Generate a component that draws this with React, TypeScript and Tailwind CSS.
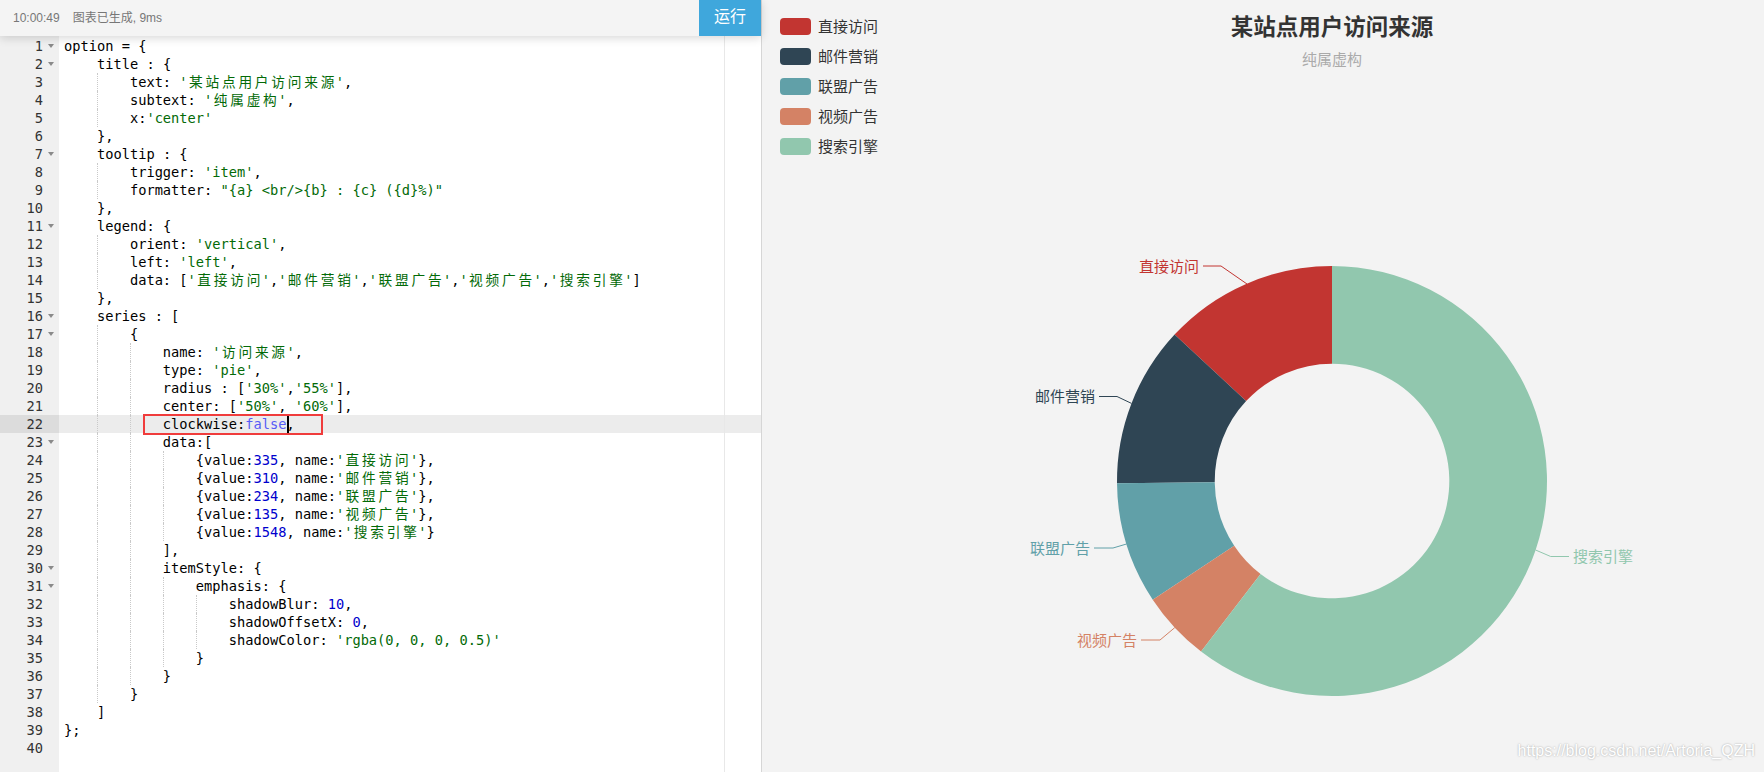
import React from "react"

const mono = "font-['DejaVu_Sans_Mono','Noto_Sans_CJK_SC',monospace]"
const cjk = "font-['Noto_Sans_CJK_SC',sans-serif]"

const CODE = [
  "option = {",
  "    title : {",
  "        text: '某站点用户访问来源',",
  "        subtext: '纯属虚构',",
  "        x:'center'",
  "    },",
  "    tooltip : {",
  "        trigger: 'item',",
  '        formatter: "{a} <br/>{b} : {c} ({d}%)"',
  "    },",
  "    legend: {",
  "        orient: 'vertical',",
  "        left: 'left',",
  "        data: ['直接访问','邮件营销','联盟广告','视频广告','搜索引擎']",
  "    },",
  "    series : [",
  "        {",
  "            name: '访问来源',",
  "            type: 'pie',",
  "            radius : ['30%','55%'],",
  "            center: ['50%', '60%'],",
  "            clockwise:false,",
  "            data:[",
  "                {value:335, name:'直接访问'},",
  "                {value:310, name:'邮件营销'},",
  "                {value:234, name:'联盟广告'},",
  "                {value:135, name:'视频广告'},",
  "                {value:1548, name:'搜索引擎'}",
  "            ],",
  "            itemStyle: {",
  "                emphasis: {",
  "                    shadowBlur: 10,",
  "                    shadowOffsetX: 0,",
  "                    shadowColor: 'rgba(0, 0, 0, 0.5)'",
  "                }",
  "            }",
  "        }",
  "    ]",
  "};",
  "",
]

const FOLDS = new Set([1, 2, 7, 11, 16, 17, 23, 30, 31])
const ACTIVE = 22

const DATA = [
  { name: "直接访问", value: 335, color: "#c23531" },
  { name: "邮件营销", value: 310, color: "#2f4554" },
  { name: "联盟广告", value: 234, color: "#61a0a8" },
  { name: "视频广告", value: 135, color: "#d48265" },
  { name: "搜索引擎", value: 1548, color: "#91c7ae" },
]

// label lines, measured off the chart (panel coords)
const LABELS = [
  { line: "485,284 459,266 441,266", x: 437, y: 265, anchor: "end" },
  { line: "369.5,403.4 355,396.5 337,396.5", x: 333, y: 395, anchor: "end" },
  { line: "364.5,544 351,548 332,548", x: 328, y: 547, anchor: "end" },
  { line: "412.8,627.6 398,640 379,640", x: 375, y: 639, anchor: "end" },
  { line: "773.6,550 788.7,556.5 807,556.5", x: 811, y: 555, anchor: "start" },
]

const CX = 570
const CY = 481
const R = 215
const R0 = 117.3

function pt(r: number, deg: number) {
  const a = (deg * Math.PI) / 180
  return [CX + r * Math.cos(a), CY - r * Math.sin(a)]
}

function ringSlice(a0: number, a1: number) {
  const large = a1 - a0 > 180 ? 1 : 0
  const [x0, y0] = pt(R, a0)
  const [x1, y1] = pt(R, a1)
  const [x2, y2] = pt(R0, a1)
  const [x3, y3] = pt(R0, a0)
  return `M${x0} ${y0} A${R} ${R} 0 ${large} 0 ${x1} ${y1} L${x2} ${y2} A${R0} ${R0} 0 ${large} 1 ${x3} ${y3}Z`
}

function wide(s: string) {
  return s.split(/([\u4e00-\u9fff])/).map((p, i) =>
    /[\u4e00-\u9fff]/.test(p) ? (
      <span key={i} className="inline-block w-[2ch] text-center">
        {p}
      </span>
    ) : (
      p
    )
  )
}

function tokenColor(t: string) {
  if (t.startsWith("'") || t.startsWith('"')) return "text-[#036a07]"
  if (/^\d+$/.test(t)) return "text-[#0000cd]"
  if (t === "false") return "text-[#585cf6]"
  return ""
}

function CodeLine({ text, active }: { text: string; active: boolean }) {
  const indent = text.match(/^ */)![0].length
  const levels = Math.floor(indent / 4)
  const rest = text.slice(levels * 4)
  const tokens = rest.split(/('[^']*'|"[^"]*"|\b\d+\b|\bfalse\b)/).filter(Boolean)

  return (
    <div className={active ? "h-[18px] whitespace-pre pl-[5px] leading-[18px] bg-[#ececec]" : "h-[18px] whitespace-pre pl-[5px] leading-[18px]"}>
      {Array.from({ length: levels }, (_, k) => (
        <span
          key={k}
          className={
            k > 0
              ? "inline-block h-[18px] w-[4ch] align-top border-l border-dotted border-[#c9c9c9]"
              : "inline-block h-[18px] w-[4ch] align-top"
          }
        />
      ))}
      {tokens.map((t, i) => (
        <span key={i} className={tokenColor(t)}>
          {wide(t)}
        </span>
      ))}
    </div>
  )
}

function Editor() {
  return (
    <div className="relative flex w-[762px] shrink-0 flex-col border-r border-[#d6d6d6] bg-white">
      {/* control bar */}
      <div className="relative z-10 flex h-[36px] shrink-0 items-center bg-[#f4f4f4] text-[12px] text-[#777] shadow-[0_2px_9px_rgba(0,0,0,0.16)] font-['Liberation_Sans','Noto_Sans_CJK_SC',sans-serif]">
        <span className="pl-[13px]">10:00:49</span>
        <span className="ml-[13px]">图表已生成, 9ms</span>
        <button className="ml-auto flex h-full w-[62px] items-center justify-center bg-[#3fa7dc] pb-[3px] text-[16px] text-white">
          运行
        </button>
      </div>

      <div className={`relative flex flex-1 text-[13.7px] text-black ${mono}`}>
        {/* gutter */}
        <div className="w-[59px] shrink-0 bg-[#f0f0f0] pt-px text-[#333]">
          {CODE.map((_, i) => (
            <div key={i} className={i + 1 === ACTIVE ? "flex h-[18px] items-center bg-[#dcdcdc]" : "flex h-[18px] items-center"}>
              <span className="w-[43px] text-right leading-[18px]">{i + 1}</span>
              <span className="flex w-[16px] justify-center">
                {FOLDS.has(i + 1) && (
                  <svg width="6" height="4" viewBox="0 0 6 4">
                    <polygon points="0,0 6,0 3,4" fill="#8a8a8a" />
                  </svg>
                )}
              </span>
            </div>
          ))}
        </div>

        {/* code */}
        <div className="relative flex-1 pt-px">
          {CODE.map((line, i) => (
            <CodeLine key={i} text={line} active={i + 1 === ACTIVE} />
          ))}
          {/* print margin */}
          <div className="absolute bottom-0 left-[665px] top-0 w-px bg-[#e8e8e8]" />
          {/* cursor */}
          <div className="absolute left-[228px] top-[379px] h-[18px] w-[2px] bg-black" />
          {/* annotation box */}
          <div className="absolute left-[84px] top-[378px] h-[21px] w-[180px] border-2 border-[#f03c3c]" />
        </div>
      </div>
    </div>
  )
}

function Chart() {
  const total = DATA.reduce((s, d) => s + d.value, 0)
  let a = 90
  const slices = DATA.map((d) => {
    const a0 = a
    a += (d.value / total) * 360
    return { ...d, a0, a1: a }
  })

  return (
    <div className={`relative flex-1 overflow-hidden bg-[#f3f3f3] ${cjk}`}>
      <svg className="absolute inset-0" width="1002" height="772">
        <text x="570" y="25" textAnchor="middle" dominantBaseline="central" fontSize="22.5" fontWeight="700" fill="#333">
          某站点用户访问来源
        </text>
        <text x="570" y="58" textAnchor="middle" dominantBaseline="central" fontSize="15" fill="#aaa">
          纯属虚构
        </text>
        {slices.map((s) => (
          <path key={s.name} d={ringSlice(s.a0, s.a1)} fill={s.color} />
        ))}
        {slices.map((s, i) => (
          <g key={s.name}>
            <polyline points={LABELS[i].line} fill="none" stroke={s.color} strokeWidth="1" />
            <text
              x={LABELS[i].x}
              y={LABELS[i].y}
              textAnchor={LABELS[i].anchor as "start" | "end"}
              dominantBaseline="central"
              fontSize="15"
              fill={s.color}
            >
              {s.name}
            </text>
          </g>
        ))}
      </svg>

      {/* legend */}
      <div className="relative flex flex-col gap-[13px] pl-[18px] pt-[18px]">
        {DATA.map((d) => (
          <div key={d.name} className="flex h-[17px] items-center gap-[7px]">
            <span className="h-[17px] w-[31px] rounded-[4px]" style={{ backgroundColor: d.color }} />
            <span className="pb-[2px] text-[15px] leading-[17px] text-[#333]">{d.name}</span>
          </div>
        ))}
      </div>

      <div className="absolute bottom-[9px] right-[9px] text-[16px] text-white font-['Liberation_Sans',sans-serif] [text-shadow:0_0_2px_rgba(0,0,0,0.35)]">
        https://blog.csdn.net/Artoria_QZH
      </div>
    </div>
  )
}

export default function App() {
  return (
    <div className="flex h-[772px] w-[1764px] overflow-hidden">
      <Editor />
      <Chart />
    </div>
  )
}
